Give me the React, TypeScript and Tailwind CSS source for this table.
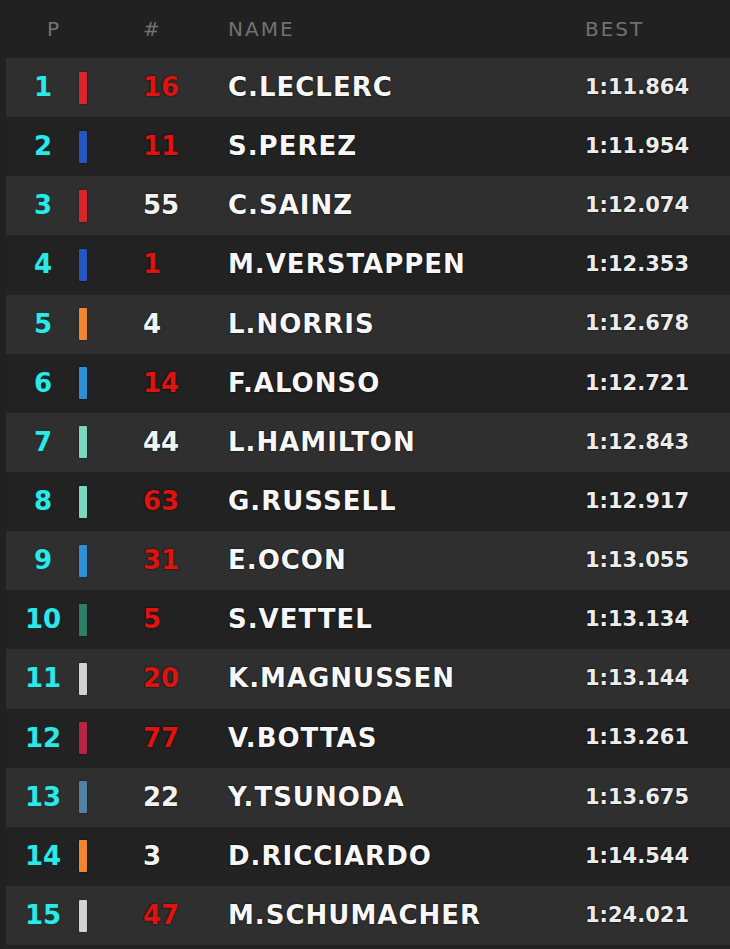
import React from "react";

type Row = { pos: number; bar: string; num: string; red: boolean; name: string; time: string };

const rows: Row[] = [
  { pos: 1, bar: "#d9262b", num: "16", red: true, name: "C.LECLERC", time: "1:11.864" },
  { pos: 2, bar: "#2356c2", num: "11", red: true, name: "S.PEREZ", time: "1:11.954" },
  { pos: 3, bar: "#d9262b", num: "55", red: false, name: "C.SAINZ", time: "1:12.074" },
  { pos: 4, bar: "#2356c2", num: "1", red: true, name: "M.VERSTAPPEN", time: "1:12.353" },
  { pos: 5, bar: "#f2862e", num: "4", red: false, name: "L.NORRIS", time: "1:12.678" },
  { pos: 6, bar: "#2f8fd6", num: "14", red: true, name: "F.ALONSO", time: "1:12.721" },
  { pos: 7, bar: "#78d8c0", num: "44", red: false, name: "L.HAMILTON", time: "1:12.843" },
  { pos: 8, bar: "#78d8c0", num: "63", red: true, name: "G.RUSSELL", time: "1:12.917" },
  { pos: 9, bar: "#2f8fd6", num: "31", red: true, name: "E.OCON", time: "1:13.055" },
  { pos: 10, bar: "#2f7f68", num: "5", red: true, name: "S.VETTEL", time: "1:13.134" },
  { pos: 11, bar: "#d2d2d2", num: "20", red: true, name: "K.MAGNUSSEN", time: "1:13.144" },
  { pos: 12, bar: "#b32540", num: "77", red: true, name: "V.BOTTAS", time: "1:13.261" },
  { pos: 13, bar: "#5281a6", num: "22", red: false, name: "Y.TSUNODA", time: "1:13.675" },
  { pos: 14, bar: "#f2862e", num: "3", red: false, name: "D.RICCIARDO", time: "1:14.544" },
  { pos: 15, bar: "#d2d2d2", num: "47", red: true, name: "M.SCHUMACHER", time: "1:24.021" },
];

const font = "font-['DejaVu_Sans',sans-serif]";

export default function App() {
  return (
    <div className={`w-[730px] h-[949px] bg-[#212121] ${font} overflow-hidden`}>
      <div className="h-[58px] flex items-center text-[20px] tracking-[2px] text-[#727272]">
        <div className="w-[47px]" />
        <div className="w-[96px]">P</div>
        <div className="w-[85px]">#</div>
        <div className="w-[357px]">NAME</div>
        <div>BEST</div>
      </div>
      <div className="h-[887px] ml-[6px] flex flex-col">
        {rows.map((r, i) => (
          <div
            key={r.pos}
            className={`flex-1 flex items-center ${i % 2 === 0 ? "bg-[#2f2f2f]" : "bg-[#222222]"}`}
          >
            <div className="w-[60px] ml-[7px] text-center text-[26px] font-bold text-[#2ee8e8] [text-shadow:0_0_2px_#003a3a]">
              {r.pos}
            </div>
            <div className="w-[6px]" />
            <div
              className="w-[8px] h-[32px] rounded-[1px] shadow-[0_0_2px_rgba(0,0,0,0.6)]"
              style={{ backgroundColor: r.bar }}
            />
            <div
              className={`w-[85px] ml-[56px] text-[26px] font-bold ${
                r.red ? "text-[#dd1410]" : "text-[#f2f2f2]"
              } [text-shadow:0_0_2px_#000]`}
            >
              {r.num}
            </div>
            <div className="flex-1 text-[26px] font-bold tracking-[1px] text-[#f7f7f7] [text-shadow:0_0_2px_#000]">
              {r.name}
            </div>
            <div className="w-[145px] text-[21px] font-bold text-[#ececec] [text-shadow:0_0_2px_#000]">
              {r.time}
            </div>
          </div>
        ))}
      </div>
    </div>
  );
}
